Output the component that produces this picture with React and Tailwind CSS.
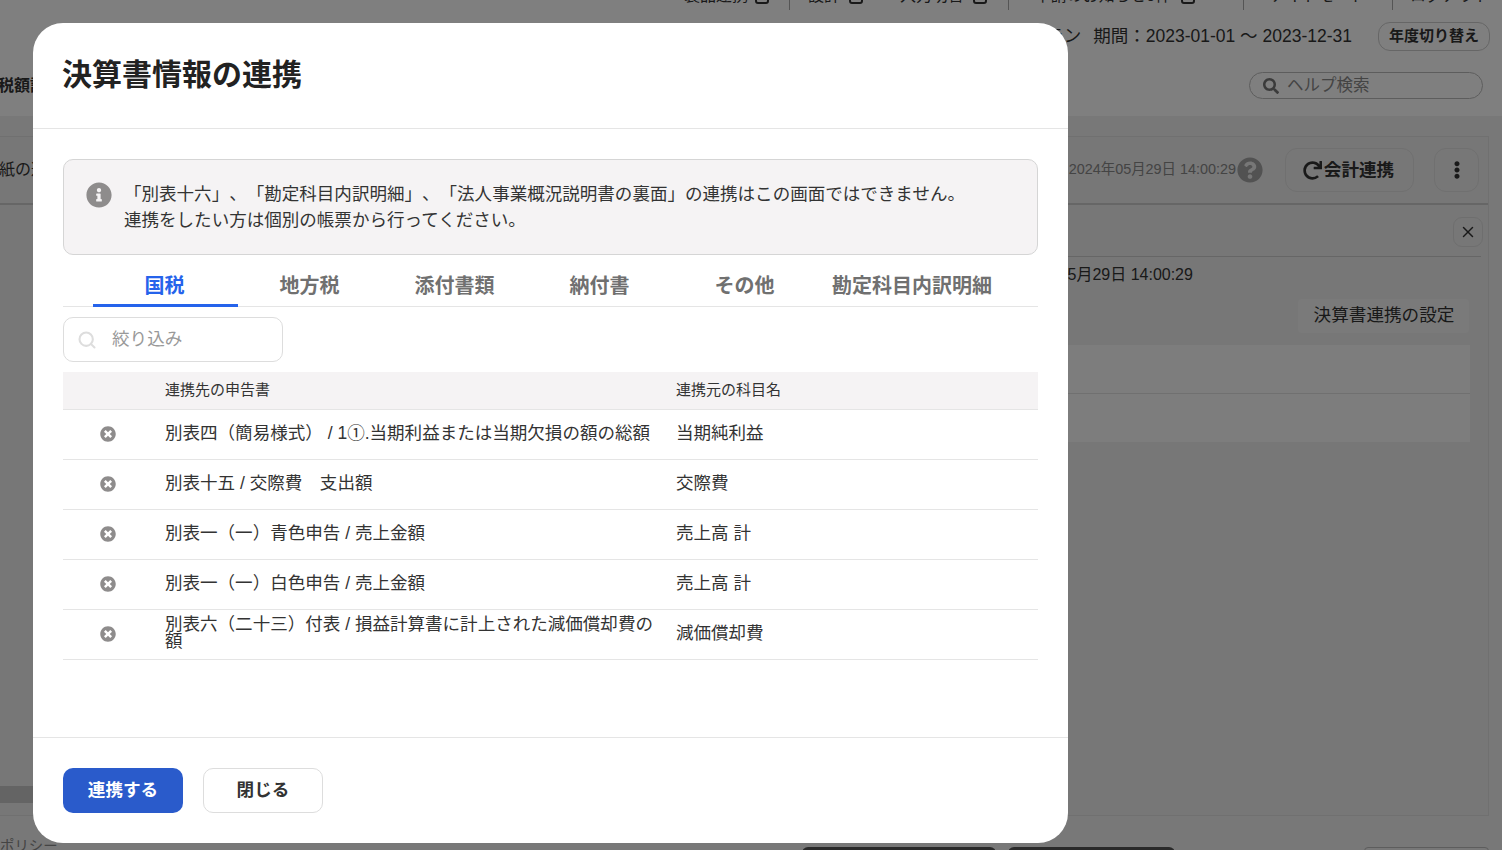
import React from "react";
import { FaInfoCircle, FaQuestionCircle, FaRedo, FaSearch, FaTimesCircle, FaEllipsisV } from "react-icons/fa";
import { Search, X } from "lucide-react";

const font = "font-['Liberation_Sans','Noto_Sans_CJK_JP',sans-serif] [text-spacing-trim:space-all]";

const tabs = [
  { label: "国税", width: "w-[145px]", active: true },
  { label: "地方税", width: "w-[145px]" },
  { label: "添付書類", width: "w-[145px]" },
  { label: "納付書", width: "w-[145px]" },
  { label: "その他", width: "w-[145px]" },
  { label: "勘定科目内訳明細", width: "w-[190px]" },
];

const rows = [
  ["別表四（簡易様式） / 1①.当期利益または当期欠損の額の総額", "当期純利益"],
  ["別表十五 / 交際費　支出額", "交際費"],
  ["別表一（一）青色申告 / 売上金額", "売上高 計"],
  ["別表一（一）白色申告 / 売上金額", "売上高 計"],
  ["別表六（二十三）付表 / 損益計算書に計上された減価償却費の額", "減価償却費"],
];

const NavIcon = () => <span className="h-[16px] w-[14px] rounded-[3px] border-2 border-[#333]" />;

const BackgroundPage = () => (
  <div className="flex h-screen flex-col overflow-hidden bg-[#f0f0f0] text-[#333]">
    <header className="flex h-[116px] shrink-0 flex-col bg-white">
      <div className="flex h-[10px] justify-end text-[16px] leading-[16px]">
        <div className="flex w-[110px] items-end overflow-hidden border-r border-[#aaa] pl-[4px]">
          <div className="flex -translate-y-[6px] items-end gap-[7px]"><span>製品連携</span><NavIcon /></div>
        </div>
        <div className="flex w-[219px] items-end overflow-hidden border-r border-[#aaa] pl-[18px]">
          <div className="flex -translate-y-[6px] items-end gap-[9px]"><span>設計</span><NavIcon /><span className="ml-[28px]">入力切替</span><NavIcon /></div>
        </div>
        <div className="flex w-[235px] items-end overflow-hidden border-r border-[#aaa] pl-[16px]">
          <div className="flex -translate-y-[6px] items-end gap-[10px] whitespace-nowrap"><span>●申請のお知らせ0件</span><NavIcon /></div>
        </div>
        <div className="flex w-[149px] items-end justify-center overflow-hidden border-r border-[#aaa]">
          <span className="-translate-y-[6px]">ナイトモード</span>
        </div>
        <div className="flex w-[109px] items-end overflow-hidden pl-[17px]">
          <span className="-translate-y-[6px]">ログアウト</span>
        </div>
      </div>
      <div className="mt-[12px] flex h-[29px] items-center justify-end pr-[12px]">
        <span className="mr-[12px] text-[17.5px]">プラン</span>
        <span className="mr-[26px] text-[17.5px]">期間：2023-01-01 ～ 2023-12-31</span>
        <button className="h-[29px] w-[112px] rounded-[12px] border border-[#ccc] text-[15px] font-bold">年度切り替え</button>
      </div>
      <div className="mt-[21px] flex h-[27px] items-center justify-between pr-[19px]">
        <span className="-ml-[2px] text-[16px] font-bold">税額計算</span>
        <div className="flex h-[27px] w-[234px] items-center gap-[8px] rounded-full border border-[#bbb] pl-[13px] text-[16.5px] text-[#888]">
          <FaSearch className="text-[16px] text-[#777]" />
          ヘルプ検索
        </div>
      </div>
    </header>
    <main className="flex-1 pr-[13px] pt-[20px]">
      <div className="h-[680px] border border-l-0 border-[#e0e0e0] bg-[#eeeeee]">
        <div className="flex h-[68px] items-center justify-between border-b-2 border-[#ccc] pr-[9px]">
          <span className="-ml-[17px] text-[16px]">用紙の選択</span>
          <div className="flex items-center">
            <span className="text-[14.4px] text-[#888]">2024年05月29日 14:00:29</span>
            <FaQuestionCircle className="ml-[1px] text-[26px] text-[#a4a4a4]" />
            <button className="ml-[22px] flex h-[44px] w-[129px] items-center justify-center gap-[2px] rounded-[12px] border border-[#e0e0e0] pr-[2px] text-[17.6px] font-bold">
              <FaRedo className="text-[19px]" />
              会計連携
            </button>
            <button className="ml-[20px] flex h-[44px] w-[45px] items-center justify-center rounded-[12px] border border-[#e0e0e0]">
              <FaEllipsisV className="text-[18px]" />
            </button>
          </div>
        </div>
        <div className="pl-[40px] pr-[19px]">
          <div className="mr-[-12px] flex h-[52px] items-center justify-end border-b border-[#ccc] pt-[3px]">
            <button className="-mr-[2px] flex h-[30px] w-[30px] items-center justify-center rounded-[9px] border border-[#ddd]">
              <X className="size-[18px]" strokeWidth={2} />
            </button>
          </div>
          <div className="flex h-[35px] items-center text-[16px]">
            <span className="pl-[967px]">2024年05月29日 14:00:29</span>
          </div>
          <div className="mt-[7px] flex justify-end">
            <button className="h-[34px] w-[171px] rounded-[4px] bg-[#f5f5f5] pb-[1px] pl-[1px] text-[17.6px]">決算書連携の設定</button>
          </div>
          <div className="mt-[12px] -mr-[1px]">
            <div className="h-[49px] border-b border-[#e0e0e0] bg-[#fafafa]" />
            <div className="h-[48px] bg-[#fafafa]" />
          </div>
        </div>
      </div>
      <div className="flex gap-3 pl-[802px] pt-[31px]">
        <div className="h-[20px] w-[194px] rounded-[6px] bg-[#555]" />
        <div className="h-[20px] w-[168px] rounded-[6px] bg-[#555]" />
        <div className="ml-[177px] h-[20px] w-[125px] rounded-[4px] border border-[#bbb]" />
      </div>
    </main>
    <div className="absolute bottom-[47px] left-0 h-[17px] w-[40px] bg-[#c8c8c8]" />
    <span className="absolute bottom-[-8px] left-0 text-[14.4px] text-[#888]">ポリシー</span>
  </div>
);

const Modal = () => (
  <div className="absolute left-[33px] top-[23px] flex h-[820px] w-[1035px] flex-col rounded-[30px] bg-white text-[#333]">
    <div className="flex h-[106px] shrink-0 items-center border-b border-[#e5e5e5] px-[30px] pb-[2px]">
      <h1 className="-ml-[1px] text-[30px] font-bold text-[#222]">決算書情報の連携</h1>
    </div>
    <div className="flex-1 px-[30px] pt-[30px]">
      <div className="flex h-[96px] items-start rounded-[10px] border border-[#d5d5d5] bg-[#f5f3f4] pl-[22px] pt-[22px]">
        <FaInfoCircle className="size-[26px] shrink-0 text-[#8e8c8c]" />
        <p className="ml-[12px] -mt-[1px] text-[17.55px] leading-[26px]">
          「別表十六」、「勘定科目内訳明細」、「法人事業概況説明書の裏面」の連携はこの画面ではできません。
          <br />
          連携をしたい方は個別の帳票から行ってください。
        </p>
      </div>
      <div className="mt-[11px] flex h-[41px] border-b border-[#e5e5e5] pl-[30px]">
        {tabs.map((tab) => (
          <div
            key={tab.label}
            className={`flex h-[41px] items-center justify-center pr-[2px] text-[20px] font-bold ${tab.width} ${
              tab.active ? "border-b-[3px] border-[#2563eb] pt-[1px] text-[#2563eb]" : "pb-[2px] text-[#707070]"
            }`}
          >
            {tab.label}
          </div>
        ))}
      </div>
      <div className="mt-[10px] flex h-[45px] w-[220px] items-center rounded-[10px] border border-[#ddd] pl-[13px] text-[17.6px] text-[#999]">
        <Search className="size-[20px] text-[#ddd]" strokeWidth={2.5} />
        <span className="ml-[15px]">絞り込み</span>
      </div>
      <div className="mt-[10px] flex h-[38px] items-center border-b border-[#e5e5e5] bg-[#f5f3f4] text-[15px]">
        <div className="w-[102px]" />
        <div className="w-[511px]">連携先の申告書</div>
        <div>連携元の科目名</div>
      </div>
      {rows.map(([target, source]) => (
        <div key={target} className="flex h-[50px] items-center border-b border-[#e5e5e5] pb-[3px] text-[17.55px] leading-[17px]">
          <div className="flex w-[102px] justify-center pr-[12px] pt-[1px]">
            <FaTimesCircle className="size-[16px] text-[#8e8c8c]" />
          </div>
          <div className="w-[511px] pr-[20px]">{target}</div>
          <div>{source}</div>
        </div>
      ))}
    </div>
    <div className="flex h-[106px] shrink-0 items-start gap-5 border-t border-[#e5e5e5] px-[30px] pt-[30px]">
      <button className="h-[45px] w-[120px] rounded-[10px] bg-[#2a5bcb] text-[17.6px] font-bold text-white">連携する</button>
      <button className="h-[45px] w-[120px] rounded-[10px] border border-[#ddd] text-[17.6px] font-bold">閉じる</button>
    </div>
  </div>
);

export default function App() {
  return (
    <div className={`relative h-screen overflow-hidden ${font}`}>
      <BackgroundPage />
      <div className="absolute inset-0 bg-black/50" />
      <Modal />
    </div>
  );
}
